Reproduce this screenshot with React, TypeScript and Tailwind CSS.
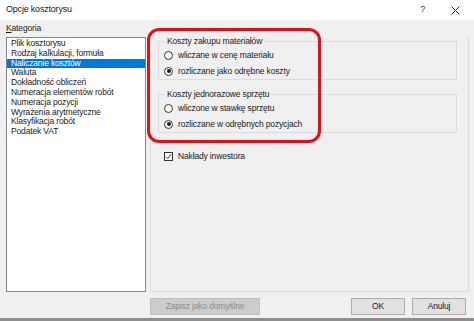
import React from 'react'

const categories = [
    'Plik kosztorysu',
    'Rodzaj kalkulacji, formuła',
    'Naliczanie kosztów',
    'Waluta',
    'Dokładność obliczeń',
    'Numeracja elementów robót',
    'Numeracja pozycji',
    'Wyrażenia arytmetyczne',
    'Klasyfikacja robót',
    'Podatek VAT',
]

const Radio = ({ checked, label }: { checked?: boolean; label: string }) => (
    <div className="h-[16px] flex items-center pl-[5px]">
        <span className="w-[9px] h-[9px] rounded-full border border-[#333] bg-white flex items-center justify-center">
            {checked && <span className="w-[4px] h-[4px] rounded-full bg-[#1a1a1a]"></span>}
        </span>
        <span className="ml-[5px]">{label}</span>
    </div>
)

const Group = ({ title, children }: { title: string; children: React.ReactNode }) => (
    <fieldset className="border border-[#dcdcdc] px-0 pb-0 w-[299px]">
        <legend className="ml-[6px] px-[2px] leading-[12px]">{title}</legend>
        {children}
    </fieldset>
)

const App = () => {
    return (
        <div
            className="relative w-[474px] h-[321px] bg-[#f0f0f0] flex flex-col overflow-hidden text-[8.5px] tracking-[-0.15px] text-[#1a1a1a]"
            style={{ fontFamily: '"Liberation Sans", Arial, sans-serif' }}
        >
            <div className="h-[20px] bg-white flex items-center pl-[6px] pr-[14px]">
                <span className="text-[9px] tracking-[-0.2px]">Opcje kosztorysu</span>
                <span className="ml-auto text-[9px] text-[#333]">?</span>
                <svg className="ml-[26px]" width="9" height="9" viewBox="0 0 9 9">
                    <path d="M0.5 0.5 L8.5 8.5 M8.5 0.5 L0.5 8.5" stroke="#222" strokeWidth="1" />
                </svg>
            </div>

            <div className="h-[17px] pl-[6px] flex items-center">
                <span><span className="underline">K</span>ategoria</span>
            </div>

            <div className="flex h-[255px] pl-[6px]">
                <div className="w-[140px] h-full bg-white border border-[#828790] pt-[1px]">
                    {categories.map((c, i) => (
                        <div
                            key={c}
                            className={
                                i === 2
                                    ? 'h-[9.8px] leading-[9.8px] pl-[4px] bg-[#0078d7] text-white'
                                    : 'h-[9.8px] leading-[9.8px] pl-[4px]'
                            }
                        >
                            {c}
                        </div>
                    ))}
                </div>

                <div className="ml-[4px] w-[319px] h-full border-l border-r border-b border-[#dcdcdc] pl-[7px]">
                    <div className="-mt-[2px]">
                        <Group title="Koszty zakupu materiałów">
                            <Radio label="wliczane w cenę materiału" />
                            <Radio checked label="rozliczane jako odrębne koszty" />
                        </Group>
                    </div>
                    <div className="mt-[8px]">
                        <Group title="Koszty jednorazowe sprzętu">
                            <Radio label="wliczone w stawkę sprzętu" />
                            <Radio checked label="rozliczane w odrębnych pozycjach" />
                        </Group>
                    </div>
                    <div className="mt-[15px] h-[16px] flex items-center pl-[6px]">
                        <span className="w-[9px] h-[9px] border border-[#333] bg-white flex items-center justify-center">
                            <svg width="7" height="7" viewBox="0 0 7 7">
                                <path d="M0.8 3.6 L2.7 5.5 L6.3 1.2" fill="none" stroke="#222" strokeWidth="0.9" />
                            </svg>
                        </span>
                        <span className="ml-[5px]">Nakłady inwestora</span>
                    </div>
                </div>
            </div>

            <div className="mt-[6px] h-[17px] flex pl-[150px] pr-[8px]">
                <div className="w-[110px] h-full bg-[#cccccc] border border-[#bfbfbf] text-[#8d8d8d] flex items-center justify-center">
                    Zapisz jako domyślne
                </div>
                <div className="ml-auto w-[54px] h-full bg-[#e1e1e1] border border-[#adadad] flex items-center justify-center">
                    OK
                </div>
                <div className="ml-[7px] w-[54px] h-full bg-[#e1e1e1] border border-[#adadad] flex items-center justify-center">
                    Anuluj
                </div>
            </div>

            <div className="mt-auto h-[3px] bg-[#8e8e8e]"></div>

            <div className="absolute left-[147px] top-[28px] w-[174px] h-[115px] border-[3.5px] border-[#d9141f] rounded-[12px]"></div>
        </div>
    )
}

export default App
